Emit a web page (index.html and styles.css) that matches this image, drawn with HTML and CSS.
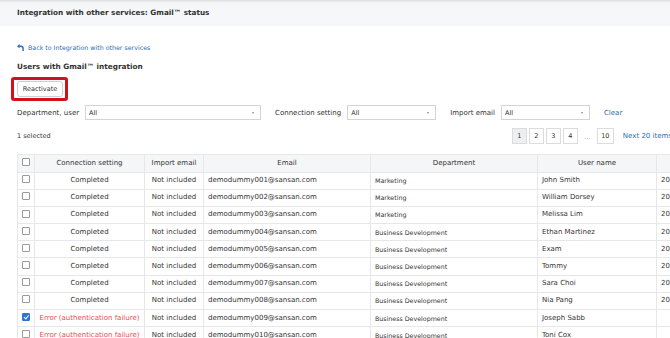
FILE: index.html
```html
<!DOCTYPE html>
<html lang="en">
<head>
<meta charset="utf-8">
<title>Gmail status</title>
<link rel="stylesheet" href="styles.css">
</head>
<body>
<div class="page">
  <header class="header">
    <h1 class="title">Integration with other services: Gmail™ status</h1>
  </header>
  <main class="content">
    <a class="back" href="#">
      <svg class="back-icon" viewBox="0 0 8 8" width="7" height="7" aria-hidden="true">
        <path d="M0 2.6 L3 0 L3 5.2 Z" fill="#2a6db5"/>
        <path d="M2.6 2.6 H4.4 Q7 2.6 7 5.2 V8" fill="none" stroke="#2a6db5" stroke-width="1.6"/>
      </svg>
      <span>Back to Integration with other services</span>
    </a>
    <h2 class="subtitle">Users with Gmail™ integration</h2>
    <div class="highlight"><button class="btn" type="button">Reactivate</button></div>
    <div class="filters">
      <label class="flabel">Department, user</label>
      <div class="select sel-wide"><span>All</span><i class="caret"></i></div>
      <label class="flabel">Connection setting</label>
      <div class="select sel-mid"><span>All</span><i class="caret"></i></div>
      <label class="flabel">Import email</label>
      <div class="select sel-mid"><span>All</span><i class="caret"></i></div>
      <a class="link clear" href="#">Clear</a>
    </div>
    <div class="toolbar">
      <span class="count">1 selected</span>
      <nav class="pager">
        <span class="pg active">1</span>
        <span class="pg">2</span>
        <span class="pg">3</span>
        <span class="pg">4</span>
        <span class="dots">…</span>
        <span class="pg pg-wide">10</span>
        <a class="link next" href="#">Next 20 items</a>
      </nav>
    </div>
    <table class="grid">
      <colgroup>
        <col class="c-chk"><col class="c-conn"><col class="c-imp"><col class="c-mail"><col class="c-dept"><col class="c-user"><col class="c-date">
      </colgroup>
      <thead>
        <tr><th><i class="cb"></i></th><th>Connection setting</th><th>Import email</th><th>Email</th><th>Department</th><th>User name</th><th></th></tr>
      </thead>
      <tbody>
        <tr><td><i class="cb"></i></td><td class="ctr">Completed</td><td class="ctr">Not included</td><td>demodummy001@sansan.com</td><td class="dept">Marketing</td><td>John Smith</td><td>2020/01/01 10:00</td></tr>
        <tr><td><i class="cb"></i></td><td class="ctr">Completed</td><td class="ctr">Not included</td><td>demodummy002@sansan.com</td><td class="dept">Marketing</td><td>William Dorsey</td><td>2020/01/01 10:00</td></tr>
        <tr><td><i class="cb"></i></td><td class="ctr">Completed</td><td class="ctr">Not included</td><td>demodummy003@sansan.com</td><td class="dept">Marketing</td><td>Melissa Lim</td><td>2020/01/01 10:00</td></tr>
        <tr><td><i class="cb"></i></td><td class="ctr">Completed</td><td class="ctr">Not included</td><td>demodummy004@sansan.com</td><td class="dept">Business Development</td><td>Ethan Martinez</td><td>2020/01/01 10:00</td></tr>
        <tr><td><i class="cb"></i></td><td class="ctr">Completed</td><td class="ctr">Not included</td><td>demodummy005@sansan.com</td><td class="dept">Business Development</td><td>Exam</td><td>2020/01/01 10:00</td></tr>
        <tr><td><i class="cb"></i></td><td class="ctr">Completed</td><td class="ctr">Not included</td><td>demodummy006@sansan.com</td><td class="dept">Business Development</td><td>Tommy</td><td>2020/01/01 10:00</td></tr>
        <tr><td><i class="cb"></i></td><td class="ctr">Completed</td><td class="ctr">Not included</td><td>demodummy007@sansan.com</td><td class="dept">Business Development</td><td>Sara Choi</td><td>2020/01/01 10:00</td></tr>
        <tr><td><i class="cb"></i></td><td class="ctr">Completed</td><td class="ctr">Not included</td><td>demodummy008@sansan.com</td><td class="dept">Business Development</td><td>Nia Pang</td><td>2020/01/01 10:00</td></tr>
        <tr><td><i class="cb checked"></i></td><td class="ctr err">Error (authentication failure)</td><td class="ctr">Not included</td><td>demodummy009@sansan.com</td><td class="dept">Business Development</td><td>Joseph Sabb</td><td></td></tr>
        <tr><td><i class="cb"></i></td><td class="ctr err">Error (authentication failure)</td><td class="ctr">Not included</td><td>demodummy010@sansan.com</td><td class="dept">Business Development</td><td>Toni Cox</td><td></td></tr>
      </tbody>
    </table>
  </main>
</div>
</body>
</html>
```
FILE: styles.css
```css
html, body {
  margin: 0;
  padding: 0;
  overflow: hidden;
  background: #fff;
}
body {
  font-family: "DejaVu Sans", sans-serif;
  font-size: 7px;
  color: #333;
}
.page {
  width: 670px;
  height: 338px;
  overflow: hidden;
}
.header {
  height: 26px;
  display: flex;
  align-items: center;
  padding-left: 17px;
  background: #f6f7f9;
  box-shadow: inset 0 4px 3px -3px rgba(0, 0, 0, 0.12);
}
.title {
  margin: 0;
  font-size: 7.3px;
  font-weight: bold;
  color: #333;
  line-height: 10px;
}
.content {
  padding: 0 0 0 17px;
  width: 655px;
}
.back {
  display: flex;
  align-items: center;
  gap: 4px;
  margin-top: 16px;
  height: 10px;
  color: #2a6db5;
  text-decoration: none;
  font-size: 6.3px;
}
.back-icon {
  display: block;
}
.subtitle {
  margin: 10px 0 0;
  font-size: 7.3px;
  font-weight: bold;
  line-height: 10px;
  color: #333;
}
.highlight {
  display: inline-block;
  margin: 5px 0 0 -6px;
  border: 3px solid #d0121b;
  border-radius: 3px;
  padding: 1px 2px 1px 3px;
}
.btn {
  display: block;
  width: 46px;
  height: 16px;
  padding: 0;
  border: 1px solid #cfcfcf;
  border-radius: 3px;
  background: #fff;
  font-family: inherit;
  font-size: 6.5px;
  color: #333;
}
.filters {
  display: flex;
  align-items: center;
  height: 15px;
  margin-top: 4px;
}
.flabel {
  margin-right: 6px;
  color: #333;
}
.select {
  position: relative;
  box-sizing: border-box;
  height: 15px;
  border: 1px solid #d4d4d4;
  background: #fff;
  display: flex;
  align-items: center;
  padding-left: 3px;
  margin-right: 14px;
  font-size: 6.5px;
  color: #333;
}
.sel-wide { width: 176px; }
.sel-mid { width: 89px; }
.caret {
  position: absolute;
  right: 6px;
  top: 6px;
  width: 0;
  height: 0;
  border-left: 1.5px solid transparent;
  border-right: 1.5px solid transparent;
  border-top: 2px solid #888;
}
.link {
  color: #2a6db5;
  text-decoration: none;
}
.clear {
  margin-left: 0;
}
.toolbar {
  display: flex;
  justify-content: space-between;
  align-items: center;
  margin-top: 8px;
  height: 16px;
}
.count {
  font-size: 6.5px;
  color: #333;
}
.pager {
  display: flex;
  align-items: center;
  gap: 2px;
}
.pg {
  box-sizing: border-box;
  width: 15px;
  height: 16px;
  border: 1px solid #dcdcdc;
  background: #fff;
  display: flex;
  align-items: center;
  justify-content: center;
  font-size: 6.5px;
  color: #333;
}
.pg.active {
  background: #eeeff1;
}
.pg-wide {
  width: 17px;
}
.dots {
  width: 15px;
  text-align: center;
  color: #888;
  font-size: 6px;
}
.next {
  margin-left: 7px;
}
.grid {
  margin-top: 10px;
  border-collapse: collapse;
  table-layout: fixed;
  width: 739px;
}
.c-chk { width: 17px; }
.c-conn { width: 110px; }
.c-imp { width: 59px; }
.c-mail { width: 167px; }
.c-dept { width: 167px; }
.c-user { width: 119px; }
.c-date { width: 100px; }
.grid th, .grid td {
  border: 1px solid #e6e7e9;
  padding: 0 4px;
  height: 16.2px;
  line-height: 15px;
  white-space: nowrap;
  overflow: hidden;
  text-align: left;
  font-weight: normal;
  color: #333;
}
.grid th {
  background: #f5f6f8;
  text-align: center;
  height: 16.5px;
}
.grid th:first-child, .grid td:first-child {
  padding: 0;
  text-align: center;
}
.grid td.ctr {
  text-align: center;
}
.grid td.dept {
  font-size: 6.3px;
  color: #333;
}
.grid td.err {
  color: #ea4b55;
}
.cb {
  display: inline-block;
  box-sizing: border-box;
  width: 8px;
  height: 8px;
  border: 1px solid #9a9a9a;
  border-radius: 1px;
  background: #fff;
  vertical-align: middle;
  position: relative;
  top: -1px;
}
.cb.checked {
  background: #2f74d0;
  border-color: #2f74d0;
}
.cb.checked::after {
  content: "";
  position: absolute;
  left: 2px;
  top: 0.3px;
  width: 1.8px;
  height: 3.6px;
  border: solid #fff;
  border-width: 0 1px 1px 0;
  transform: rotate(40deg);
}
```
